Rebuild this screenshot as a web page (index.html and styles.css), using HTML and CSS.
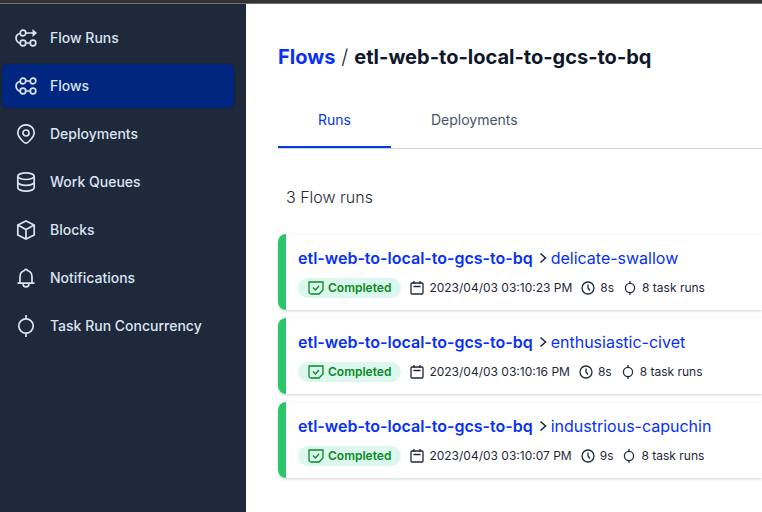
FILE: index.html
```html
<!DOCTYPE html>
<html lang="en">
<head>
<meta charset="utf-8">
<meta name="viewport" content="width=device-width, initial-scale=1">
<title>Flows</title>
<link rel="stylesheet" href="styles.css">
</head>
<body>
<svg class="sprite" aria-hidden="true">
  <symbol id="flow-runs" viewBox="0 0 22 18"><circle cx="8" cy="4" r="2.800"/><circle cx="8" cy="14" r="2.800"/><circle cx="18" cy="14" r="2.800"/><path d="M10.800 4H18M10.800 14h4.400M5.200 4.500C3 4.500 1 6.500 1 9s2 5 4.200 5"/><path class="solid" d="M17.500 0 22 4l-4.500 4z"/></symbol>
  <symbol id="flows" viewBox="0 0 22 18"><circle cx="8" cy="4" r="2.800"/><circle cx="18" cy="4" r="2.800"/><circle cx="8" cy="14" r="2.800"/><circle cx="18" cy="14" r="2.800"/><path d="M10.800 4h4.400M10.800 14h4.400M5.200 4.500C3 4.500 1 6.500 1 9s2 5 4.200 5"/></symbol>
  <symbol id="pin" viewBox="0 0 20 20"><path d="M10 19.200C8.800 19.200 1.800 13.500 1.800 8.500a8.200 7.700 0 0 1 16.400 0c0 5-7 10.700-8.200 10.700z"/><circle cx="10" cy="9" r="3"/></symbol>
  <symbol id="database" viewBox="0 0 20 20"><ellipse cx="10" cy="4.200" rx="8.200" ry="3.300"/><path d="M1.800 4.200v11.600c0 1.900 3.700 3.300 8.200 3.300s8.200-1.400 8.200-3.300V4.200M1.800 10c0 1.900 3.700 3.300 8.200 3.300s8.200-1.400 8.200-3.300"/></symbol>
  <symbol id="cube" viewBox="0 0 20 20"><path d="M10 1 18.200 5v10L10 19 1.800 15V5zM1.800 5 10 9.500 18.200 5M10 9.500V19"/></symbol>
  <symbol id="bell" viewBox="0 0 20 20"><path d="M1.500 15.200h17M4 15.200V9C4 5 6.500 3 8.500 2.500c.3-1.700 2.700-1.700 3 0C13.500 3 16 5 16 9v6.200M7 15.500c0 4.500 6 4.500 6 0"/></symbol>
  <symbol id="task" viewBox="0 0 20 22"><circle cx="10" cy="11" r="7.200"/><path d="M10 0v4M10 18v4"/></symbol>
  <symbol id="state" viewBox="0 0 16 14"><path d="M1 1h14v8l-4 4H3a2 2 0 0 1-2-2zM5 6.500 7.500 9 11 5"/></symbol>
  <symbol id="calendar" viewBox="0 0 14 14"><path d="M2 2h10a1 1 0 0 1 1 1v9a1 1 0 0 1-1 1H2a1 1 0 0 1-1-1V3a1 1 0 0 1 1-1zM4 0v3M10 0v3M3.500 5.500h7"/></symbol>
  <symbol id="clock" viewBox="0 0 14 14"><circle cx="7" cy="7" r="6"/><path d="M7 3.500V7l2 2.500"/></symbol>
  <symbol id="chevron" viewBox="0 0 8 12"><path d="m1.500 1.500 5 4.500-5 4.500"/></symbol>
</svg>
<div class="topbar"></div>
<div class="app">
  <nav class="sidebar">
    <a class="nav-item" href="#"><svg class="nav-icon wide"><use href="#flow-runs"/></svg>Flow Runs</a>
    <a class="nav-item active" href="#" aria-current="page"><svg class="nav-icon wide"><use href="#flows"/></svg>Flows</a>
    <a class="nav-item" href="#"><svg class="nav-icon"><use href="#pin"/></svg>Deployments</a>
    <a class="nav-item" href="#"><svg class="nav-icon"><use href="#database"/></svg>Work Queues</a>
    <a class="nav-item" href="#"><svg class="nav-icon"><use href="#cube"/></svg>Blocks</a>
    <a class="nav-item" href="#"><svg class="nav-icon"><use href="#bell"/></svg>Notifications</a>
    <a class="nav-item" href="#"><svg class="nav-icon tall"><use href="#task"/></svg>Task Run Concurrency</a>
  </nav>
  <main class="content">
    <h1 class="crumbs"><a href="#">Flows</a><span class="slash">/</span>etl-web-to-local-to-gcs-to-bq</h1>
    <div class="tabs" role="tablist">
      <button class="tab selected" type="button" role="tab" aria-selected="true">Runs</button>
      <button class="tab" type="button" role="tab" aria-selected="false">Deployments</button>
    </div>
    <p class="count">3 Flow runs</p>
    <div class="runs">
      <article class="run">
        <div class="run-title"><a class="flow" href="#">etl-web-to-local-to-gcs-to-bq</a><svg class="chevron"><use href="#chevron"/></svg><a class="name" href="#">delicate-swallow</a></div>
        <div class="meta">
          <span class="badge"><svg class="state-icon"><use href="#state"/></svg>Completed</span>
          <span class="fact"><svg class="fact-icon"><use href="#calendar"/></svg>2023/04/03 03:10:23 PM</span>
          <span class="fact"><svg class="fact-icon"><use href="#clock"/></svg>8s</span>
          <span class="fact"><svg class="fact-icon task-icon"><use href="#task"/></svg>8 task runs</span>
        </div>
      </article>
      <article class="run">
        <div class="run-title"><a class="flow" href="#">etl-web-to-local-to-gcs-to-bq</a><svg class="chevron"><use href="#chevron"/></svg><a class="name" href="#">enthusiastic-civet</a></div>
        <div class="meta">
          <span class="badge"><svg class="state-icon"><use href="#state"/></svg>Completed</span>
          <span class="fact"><svg class="fact-icon"><use href="#calendar"/></svg>2023/04/03 03:10:16 PM</span>
          <span class="fact"><svg class="fact-icon"><use href="#clock"/></svg>8s</span>
          <span class="fact"><svg class="fact-icon task-icon"><use href="#task"/></svg>8 task runs</span>
        </div>
      </article>
      <article class="run">
        <div class="run-title"><a class="flow" href="#">etl-web-to-local-to-gcs-to-bq</a><svg class="chevron"><use href="#chevron"/></svg><a class="name" href="#">industrious-capuchin</a></div>
        <div class="meta">
          <span class="badge"><svg class="state-icon"><use href="#state"/></svg>Completed</span>
          <span class="fact"><svg class="fact-icon"><use href="#calendar"/></svg>2023/04/03 03:10:07 PM</span>
          <span class="fact"><svg class="fact-icon"><use href="#clock"/></svg>9s</span>
          <span class="fact"><svg class="fact-icon task-icon"><use href="#task"/></svg>8 task runs</span>
        </div>
      </article>
    </div>
  </main>
</div>
</body>
</html>
```
FILE: styles.css
```css
* { box-sizing: border-box; }
body {
  margin: 0;
  min-height: 100vh;
  display: flex;
  flex-direction: column;
  font-family: Inter, "Liberation Sans", sans-serif;
  font-size: 16px;
  color: #1e293b;
  background: #fff;
}
a { color: #0630fa; text-decoration: none; }
svg { flex: none; fill: none; stroke: currentColor; stroke-width: 2; }
.sprite { display: none; }
.solid { fill: currentColor; stroke: none; }

.topbar { height: 4px; background: #333; border-bottom: 1px solid #6b6f6d; }
.app { flex: 1; display: flex; }

.sidebar {
  flex: none;
  width: 246px;
  padding: 12px 12px 12px 2px;
  display: flex;
  flex-direction: column;
  gap: 4px;
  background: #1e293b;
}
.nav-item {
  height: 44px;
  padding: 0 14px 1px;
  display: flex;
  align-items: center;
  gap: 14px;
  border-radius: 6px;
  color: #dbe4f0;
  font-size: 14px;
  line-height: 20px;
  font-weight: 500;
}
.nav-item.active { background: #00267f; box-shadow: 0 0 2px #101820; }
.nav-icon { width: 20px; height: 20px; stroke-width: 1.7; }
.nav-icon.wide { width: 22px; height: 18px; margin: 0 -1px; }
.nav-icon.tall { height: 22px; }

.content { flex: 1; min-width: 0; padding: 39px 0 32px 32px; }
.crumbs {
  margin: 0;
  font-size: 20px;
  line-height: 28px;
  font-weight: 700;
  color: #0f172a;
}
.slash { margin: 0 6px; font-weight: 300; }
.tabs { margin-top: 21px; display: flex; border-bottom: 1px solid #cbd5e1; }
.tab {
  height: 56px;
  padding: 1px 40px 0;
  border: 0;
  border-bottom: 2px solid transparent;
  background: none;
  font: 400 14px/20px Inter, "Liberation Sans", sans-serif;
  color: #475569;
}
.tab.selected { color: #0738e0; border-color: #0738e0; }
.count { margin: 36px 0 25px 8px; line-height: 24px; font-weight: 300; }

.runs { display: flex; flex-direction: column; gap: 8px; }
.run {
  height: 76px;
  padding: 12px;
  border-left: 8px solid #2ac769;
  border-radius: 8px 0 0 8px;
  box-shadow: 0 1px 3px #0000002e;
}
.run-title { display: flex; align-items: center; line-height: 24px; white-space: nowrap; }
.flow { font-weight: 600; }
.name { font-weight: 400; }
.chevron { width: 8px; height: 12px; margin: 0 4px 0 6px; color: #1e293b; stroke-width: 1.6; }
.meta {
  margin-top: 8px;
  display: flex;
  align-items: center;
  gap: 9px;
  font-size: 12px;
  line-height: 20px;
  white-space: nowrap;
}
.badge {
  display: flex;
  align-items: center;
  gap: 4px;
  padding: 0 10px;
  border-radius: 10px;
  background: #dcf7ed;
  color: #068a1e;
  font-weight: 600;
}
.state-icon { width: 16px; height: 14px; }
.fact { display: flex; align-items: center; gap: 5px; }
.state-icon, .fact-icon { stroke-width: 1.3; }
.fact-icon { width: 14px; height: 14px; }
.fact-icon.task-icon { stroke-width: 2; }
```
